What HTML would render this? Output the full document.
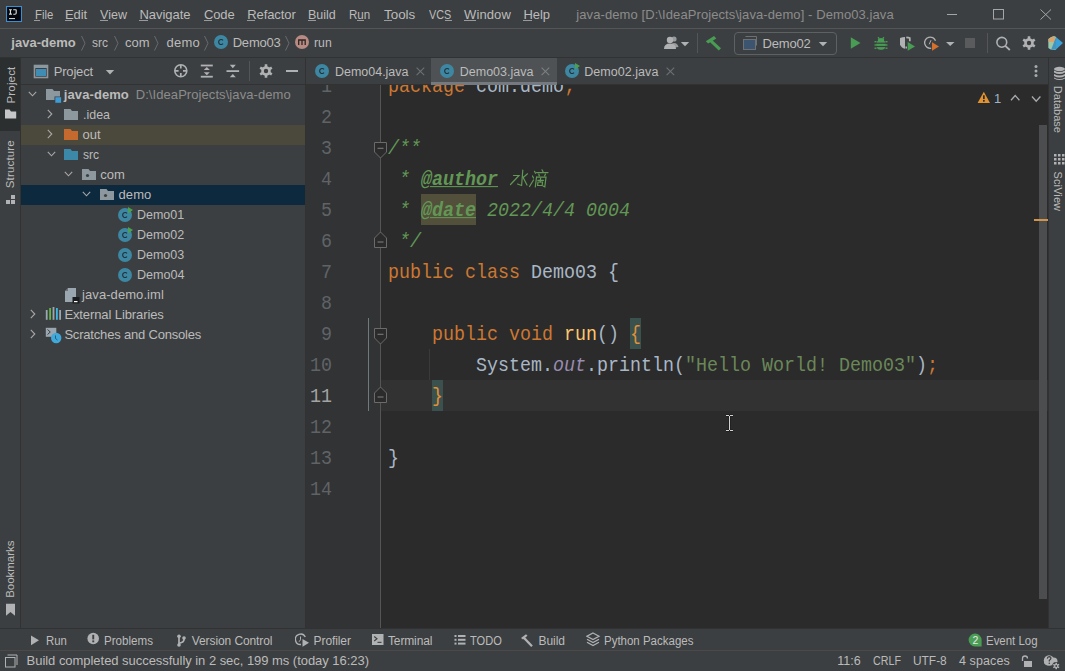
<!DOCTYPE html><html><head><meta charset="utf-8"><style>html,body{margin:0;padding:0;width:1065px;height:671px;overflow:hidden;background:#3c3f41}body>div,body>svg{position:absolute}.t{position:absolute;white-space:pre;line-height:20px}</style></head><body><div style="left:0px;top:0px;width:1065px;height:671px;background:#3c3f41;"></div>
<div style="left:0px;top:28px;width:1065px;height:1px;background:#555555;"></div>
<div style="left:0px;top:57px;width:1065px;height:1px;background:#323232;"></div>
<div style="left:0px;top:58px;width:20px;height:73px;background:#2c2f30;"></div>
<div style="left:20px;top:58px;width:1px;height:570px;background:#323232;"></div>
<div style="left:21px;top:84px;width:284px;height:1px;background:#323232;"></div>
<div style="left:305px;top:58px;width:1px;height:570px;background:#323232;"></div>
<div style="left:306px;top:84px;width:742px;height:1px;background:#323232;"></div>
<div style="left:306px;top:85px;width:74px;height:543px;background:#313335;"></div>
<div style="left:381px;top:85px;width:667px;height:543px;background:#2b2b2b;"></div>
<div style="left:1048px;top:58px;width:1px;height:570px;background:#323232;"></div>
<div style="left:0px;top:628px;width:1065px;height:1px;background:#323232;"></div>
<div style="left:0px;top:650px;width:1065px;height:1px;background:#4b4a48;"></div>
<svg style="position:absolute;left:6px;top:6px;" width="16" height="16" viewBox="0 0 16 16"><rect x="0.5" y="0.5" width="15" height="15" fill="#03070b" stroke="#3b8fd0" stroke-width="1.1"/><path d="M3 3.7H5.9M4.45 3.7V8.1M3 8.1H5.9M7.2 3.7H10.4M10.2 3.7V7 Q10.2 8.2 9 8.2 H7.3" stroke="#dcdcdc" stroke-width="1.15" fill="none"/><rect x="3" y="12.1" width="6" height="1" fill="#e0e0e0"/></svg>
<div class="t" style="left:34.50px;top:5px;font-family:'Liberation Sans', sans-serif;font-size:13px;font-weight:normal;font-style:normal;color:#bbbbbb;letter-spacing:0.000px;transform-origin:0.00px 0;transform:scaleX(0.8735);">File</div>
<div style="left:34px;top:20px;width:6px;height:1px;background:#9a9a9a;"></div>
<div class="t" style="left:65.10px;top:5px;font-family:'Liberation Sans', sans-serif;font-size:13px;font-weight:normal;font-style:normal;color:#bbbbbb;letter-spacing:-0.167px;">Edit</div>
<div style="left:65px;top:20px;width:7px;height:1px;background:#9a9a9a;"></div>
<div class="t" style="left:100.00px;top:5px;font-family:'Liberation Sans', sans-serif;font-size:13px;font-weight:normal;font-style:normal;color:#bbbbbb;letter-spacing:0.000px;transform-origin:0.00px 0;transform:scaleX(0.9643);">View</div>
<div style="left:100px;top:20px;width:8px;height:1px;background:#9a9a9a;"></div>
<div class="t" style="left:139.40px;top:5px;font-family:'Liberation Sans', sans-serif;font-size:13px;font-weight:normal;font-style:normal;color:#bbbbbb;letter-spacing:-0.029px;">Navigate</div>
<div style="left:139px;top:20px;width:9px;height:1px;background:#9a9a9a;"></div>
<div class="t" style="left:204.00px;top:5px;font-family:'Liberation Sans', sans-serif;font-size:13px;font-weight:normal;font-style:normal;color:#bbbbbb;letter-spacing:-0.133px;">Code</div>
<div style="left:204px;top:20px;width:8px;height:1px;background:#9a9a9a;"></div>
<div class="t" style="left:247.20px;top:5px;font-family:'Liberation Sans', sans-serif;font-size:13px;font-weight:normal;font-style:normal;color:#bbbbbb;letter-spacing:-0.079px;">Refactor</div>
<div style="left:247px;top:20px;width:8px;height:1px;background:#9a9a9a;"></div>
<div class="t" style="left:308.40px;top:5px;font-family:'Liberation Sans', sans-serif;font-size:13px;font-weight:normal;font-style:normal;color:#bbbbbb;letter-spacing:0.000px;transform-origin:0.00px 0;transform:scaleX(0.9619);">Build</div>
<div style="left:308px;top:20px;width:8px;height:1px;background:#9a9a9a;"></div>
<div class="t" style="left:349.40px;top:5px;font-family:'Liberation Sans', sans-serif;font-size:13px;font-weight:normal;font-style:normal;color:#bbbbbb;letter-spacing:0.000px;transform-origin:0.00px 0;transform:scaleX(0.8889);">Run</div>
<div style="left:357px;top:20px;width:7px;height:1px;background:#9a9a9a;"></div>
<div class="t" style="left:384.40px;top:5px;font-family:'Liberation Sans', sans-serif;font-size:13px;font-weight:normal;font-style:normal;color:#bbbbbb;letter-spacing:0.000px;transform-origin:0.00px 0;transform:scaleX(1.0313);">Tools</div>
<div style="left:384px;top:20px;width:8px;height:1px;background:#9a9a9a;"></div>
<div class="t" style="left:429.40px;top:5px;font-family:'Liberation Sans', sans-serif;font-size:13px;font-weight:normal;font-style:normal;color:#bbbbbb;letter-spacing:0.000px;transform-origin:0.00px 0;transform:scaleX(0.8336);">VCS</div>
<div style="left:445px;top:20px;width:7px;height:1px;background:#9a9a9a;"></div>
<div class="t" style="left:464.00px;top:5px;font-family:'Liberation Sans', sans-serif;font-size:13px;font-weight:normal;font-style:normal;color:#bbbbbb;letter-spacing:0.120px;">Window</div>
<div style="left:464px;top:20px;width:12px;height:1px;background:#9a9a9a;"></div>
<div class="t" style="left:523.40px;top:5px;font-family:'Liberation Sans', sans-serif;font-size:13px;font-weight:normal;font-style:normal;color:#bbbbbb;letter-spacing:-0.050px;">Help</div>
<div style="left:523px;top:20px;width:9px;height:1px;background:#9a9a9a;"></div>
<div class="t" style="left:576.25px;top:5px;font-family:'Liberation Sans', sans-serif;font-size:13px;font-weight:normal;font-style:normal;color:#8c8c8c;letter-spacing:0.091px;">java-demo [D:\IdeaProjects\java-demo] - Demo03.java</div>
<div style="left:947px;top:14px;width:10px;height:1px;background:#a6a6a6;"></div>
<svg style="position:absolute;left:993px;top:9px;" width="12" height="11" viewBox="0 0 12 11"><rect x="0.5" y="0.5" width="10" height="9.5" fill="none" stroke="#a6a6a6"/></svg>
<svg style="position:absolute;left:1040px;top:9px;" width="12" height="11" viewBox="0 0 12 11"><path d="M0.5 0.5L11 10.5M11 0.5L0.5 10.5" stroke="#a6a6a6" stroke-width="1"/></svg>
<div class="t" style="left:11.25px;top:33px;font-family:'Liberation Sans', sans-serif;font-size:13px;font-weight:bold;font-style:normal;color:#bbbbbb;letter-spacing:0.019px;">java-demo</div>
<svg style="position:absolute;left:80px;top:35px;" width="8" height="17" viewBox="0 0 8 17"><path d="M1.5 1 L5.0 8.2 L1.5 15.5" fill="none" stroke="#686b6d" stroke-width="1"/></svg>
<div class="t" style="left:92.00px;top:33px;font-family:'Liberation Sans', sans-serif;font-size:13px;font-weight:normal;font-style:normal;color:#bbbbbb;letter-spacing:0.000px;transform-origin:0.00px 0;transform:scaleX(0.9222);">src</div>
<svg style="position:absolute;left:113px;top:35px;" width="8" height="17" viewBox="0 0 8 17"><path d="M1.5 1 L5.0 8.2 L1.5 15.5" fill="none" stroke="#686b6d" stroke-width="1"/></svg>
<div class="t" style="left:125.00px;top:33px;font-family:'Liberation Sans', sans-serif;font-size:13px;font-weight:normal;font-style:normal;color:#bbbbbb;letter-spacing:0.025px;">com</div>
<svg style="position:absolute;left:153px;top:35px;" width="8" height="17" viewBox="0 0 8 17"><path d="M1.5 1 L5.0 8.2 L1.5 15.5" fill="none" stroke="#686b6d" stroke-width="1"/></svg>
<div class="t" style="left:166.40px;top:33px;font-family:'Liberation Sans', sans-serif;font-size:13px;font-weight:normal;font-style:normal;color:#bbbbbb;letter-spacing:0.267px;">demo</div>
<svg style="position:absolute;left:203px;top:35px;" width="8" height="17" viewBox="0 0 8 17"><path d="M1.5 1 L5.0 8.2 L1.5 15.5" fill="none" stroke="#686b6d" stroke-width="1"/></svg>
<svg style="position:absolute;left:213px;top:34px;" width="17" height="16" viewBox="0 0 17 16"><circle cx="8" cy="8" r="7" fill="#3d87a2"/><path d="M10 6.3 A2.5 2.5 0 1 0 10 9.7" fill="none" stroke="#22303a" stroke-width="1.15"/></svg>
<div class="t" style="left:232.70px;top:33px;font-family:'Liberation Sans', sans-serif;font-size:13px;font-weight:normal;font-style:normal;color:#bbbbbb;letter-spacing:-0.210px;">Demo03</div>
<svg style="position:absolute;left:284px;top:35px;" width="8" height="17" viewBox="0 0 8 17"><path d="M1.5 1 L5.0 8.2 L1.5 15.5" fill="none" stroke="#686b6d" stroke-width="1"/></svg>
<svg style="position:absolute;left:294px;top:34px;" width="16" height="16" viewBox="0 0 16 16"><circle cx="8" cy="8" r="7" fill="#b78a83"/><path d="M4.7 11V6H11.2V11M8 6V11" fill="none" stroke="#2e2523" stroke-width="1.3"/></svg>
<div class="t" style="left:313.80px;top:33px;font-family:'Liberation Sans', sans-serif;font-size:13px;font-weight:normal;font-style:normal;color:#bbbbbb;letter-spacing:0.000px;transform-origin:0.00px 0;transform:scaleX(0.9415);">run</div>
<svg style="position:absolute;left:662px;top:35px;" width="18" height="15" viewBox="0 0 18 15"><circle cx="12" cy="4" r="2.6" fill="#afb1b3" opacity="0.8"/><path d="M9 13 q0-5 3-5 q3.5 0 4.5 4" fill="#afb1b3" opacity="0.8"/><circle cx="8" cy="5" r="3.2" fill="#afb1b3"/><path d="M2 14 q0-5.5 6-5.5 q6 0 6 5.5z" fill="#afb1b3"/></svg>
<svg style="position:absolute;left:680px;top:41px;" width="10" height="6" viewBox="0 0 10 6"><path d="M0.8 1 H9.2 L5 5.2Z" fill="#afb1b3"/></svg>
<div style="left:697px;top:33px;width:1px;height:20px;background:#555555;"></div>
<svg style="position:absolute;left:704px;top:35px;" width="19" height="16" viewBox="0 0 19 16"><path d="M1.8 6.2 L10 1 L12.3 3.6 L4.2 8.6 Z" fill="#499c54"/><path d="M7.6 4.6 L17 13.2 L14.8 15.4 L5.6 6.8Z" fill="#499c54"/></svg>
<div style="left:733.5px;top:32px;width:101.5px;height:20.5px;border:1px solid #5e6162;border-radius:4px"></div>
<svg style="position:absolute;left:742px;top:35px;" width="16" height="16" viewBox="0 0 16 16"><path d="M3.5 1.5 H14.5 V10.5" fill="none" stroke="#6e7173" stroke-width="1"/><rect x="1.5" y="4.5" width="12" height="10" fill="#3c5470" stroke="#6e7173" stroke-width="1"/></svg>
<div class="t" style="left:762.50px;top:34px;font-family:'Liberation Sans', sans-serif;font-size:13px;font-weight:normal;font-style:normal;color:#bbbbbb;letter-spacing:-0.170px;">Demo02</div>
<svg style="position:absolute;left:818px;top:41px;" width="10" height="6" viewBox="0 0 10 6"><path d="M0.8 1 H9.2 L5 5.2Z" fill="#afb1b3"/></svg>
<svg style="position:absolute;left:850px;top:37px;" width="12" height="13" viewBox="0 0 12 13"><path d="M0.8 0.2 L10.5 6 L0.8 11.8Z" fill="#499c54"/></svg>
<svg style="position:absolute;left:873px;top:35px;" width="16" height="16" viewBox="0 0 16 16"><g fill="#499c54"><path d="M5 2.2 L6.3 3.6 M11 2.2 L9.7 3.6" stroke="#499c54" stroke-width="1.3"/><ellipse cx="8" cy="5" rx="3.2" ry="2"/><rect x="3.2" y="5" width="9.6" height="9.8" rx="4.2"/><rect x="1.5" y="6" width="2" height="1.4"/><rect x="12.5" y="6" width="2" height="1.4"/><rect x="1.5" y="9.3" width="2" height="1.4"/><rect x="12.5" y="9.3" width="2" height="1.4"/><rect x="1.5" y="12.5" width="2" height="1.4"/><rect x="12.5" y="12.5" width="2" height="1.4"/></g><rect x="3" y="7.6" width="10" height="1.2" fill="#3c3f41"/><rect x="3" y="10.9" width="10" height="1.2" fill="#3c3f41"/></svg>
<svg style="position:absolute;left:899px;top:36px;" width="17" height="16" viewBox="0 0 17 16"><path d="M1 2 Q3.5 1 6 1 V12.8 Q2.2 11.8 1 8.5Z" fill="#afb1b3"/><path d="M7.3 1.3 Q9.5 1.5 10.8 2 V5.3" fill="none" stroke="#afb1b3" stroke-width="1.7"/><path d="M7.2 10.5 V12.6" stroke="#afb1b3" stroke-width="1.5"/><path d="M8.7 5.9 L16 10.4 L8.7 14.8Z" fill="#499c54"/></svg>
<svg style="position:absolute;left:923px;top:35px;" width="17" height="16" viewBox="0 0 17 16"><path d="M12.5 5.8 A5.6 5.6 0 1 0 8.2 13.2" fill="none" stroke="#afb1b3" stroke-width="1.3"/><path d="M6.2 9.3 L8 5.2" fill="none" stroke="#afb1b3" stroke-width="1"/><path d="M9 7.2 L16 11.5 L9 15.8Z" fill="#d6712d"/></svg>
<svg style="position:absolute;left:946px;top:41px;" width="9" height="6" viewBox="0 0 9 6"><path d="M0 1 H8.5 L4.2 5Z" fill="#afb1b3"/></svg>
<div style="left:965px;top:38px;width:10px;height:10px;background:#595b5d;"></div>
<div style="left:987px;top:33px;width:1px;height:20px;background:#555555;"></div>
<svg style="position:absolute;left:995px;top:35px;" width="16" height="16" viewBox="0 0 16 16"><circle cx="6.8" cy="7.3" r="4.9" fill="none" stroke="#afb1b3" stroke-width="1.6"/><path d="M10.3 10.8 L14.8 15" stroke="#afb1b3" stroke-width="1.8"/></svg>
<svg style="position:absolute;left:1021px;top:35px;" width="16" height="16" viewBox="0 0 16 16"><g fill="#afb1b3"><circle cx="8" cy="8" r="4.8"/><g stroke="#afb1b3" stroke-width="2.6"><path d="M8 1.3V14.7M2.2 4.65L13.8 11.35M13.8 4.65L2.2 11.35"/></g></g><circle cx="8" cy="8" r="2.2" fill="#3c3f41"/></svg>
<svg style="position:absolute;left:1047px;top:35px;" width="18" height="17" viewBox="0 0 18 17"><path d="M1.5 4 Q6 0 9 2 L16 8 L9 14.5 Q5 16 1.5 13 Z" fill="#3aa0d8"/><path d="M1.5 4 Q6 0 9 2 L9 14.5 Q5 16 1.5 13 Z" fill="#9fc7a6"/><path d="M1.5 4 Q5 0.5 8 1.7 L8 7 L1.5 7Z" fill="#d8a46c"/><path d="M9 2 L9 14.5 L4 15" fill="#2e87c7" opacity="0.8"/></svg>
<div class="t" style="left:0;top:0;transform-origin:0 0;transform:translate(0.50px,103.50px) rotate(-90deg);font-family:'Liberation Sans',sans-serif;font-size:11.5px;color:#bbbbbb;letter-spacing:0.167px">Project</div>
<svg style="position:absolute;left:4px;top:109px;" width="13" height="11" viewBox="0 0 13 11"><path d="M1 0.5 H5.5 L7 2.5 H12.2 V9.5 H1Z" fill="#c4c6c8"/></svg>
<div class="t" style="left:0;top:0;transform-origin:0 0;transform:translate(0.30px,188.30px) rotate(-90deg);font-family:'Liberation Sans',sans-serif;font-size:11.5px;color:#bbbbbb;letter-spacing:0.169px">Structure</div>
<svg style="position:absolute;left:5px;top:194px;" width="12" height="11" viewBox="0 0 12 11"><g fill="#b0b2b4"><rect x="6" y="1" width="4" height="4"/><rect x="1" y="6" width="4" height="4"/><rect x="6" y="6" width="4" height="4"/></g></svg>
<div class="t" style="left:0;top:0;transform-origin:0 0;transform:translate(0.10px,597.80px) rotate(-90deg);font-family:'Liberation Sans',sans-serif;font-size:11.5px;color:#bbbbbb;letter-spacing:-0.038px">Bookmarks</div>
<svg style="position:absolute;left:5px;top:603px;" width="11" height="14" viewBox="0 0 11 14"><path d="M1 0.8 H10 V12.8 L5.5 9 L1 12.8Z" fill="#b0b2b4"/></svg>
<svg style="position:absolute;left:33px;top:64px;" width="16" height="15" viewBox="0 0 16 15"><rect x="1.5" y="1.5" width="13" height="12" fill="none" stroke="#8d979e" stroke-width="1.6"/><rect x="1" y="1" width="14" height="3" fill="#8d979e"/><rect x="3" y="5" width="10" height="7" fill="#3f8db5"/></svg>
<div class="t" style="left:53.70px;top:62px;font-family:'Liberation Sans', sans-serif;font-size:13px;font-weight:normal;font-style:normal;color:#bbbbbb;letter-spacing:-0.175px;">Project</div>
<svg style="position:absolute;left:105px;top:69px;" width="10" height="7" viewBox="0 0 10 7"><path d="M0.8 1 H9.2 L5 5.5Z" fill="#afb1b3"/></svg>
<svg style="position:absolute;left:173px;top:63px;" width="16" height="16" viewBox="0 0 16 16"><circle cx="7.8" cy="7.8" r="6" fill="none" stroke="#afb1b3" stroke-width="1.6"/><path d="M7.8 2V5.6M7.8 10V13.6M2 7.8H5.6M10 7.8H13.6" stroke="#afb1b3" stroke-width="1.7"/></svg>
<svg style="position:absolute;left:200px;top:64px;" width="14" height="14" viewBox="0 0 14 14"><g fill="#afb1b3"><rect x="0.8" y="0.6" width="12" height="1.8"/><rect x="0.8" y="11.8" width="12" height="1.8"/><path d="M3.8 6 L6.8 3 L9.8 6Z"/><path d="M3.8 8.2 L6.8 11.2 L9.8 8.2Z"/></g></svg>
<svg style="position:absolute;left:226px;top:64px;" width="14" height="14" viewBox="0 0 14 14"><g fill="#afb1b3"><rect x="0.5" y="6.2" width="12.6" height="1.8"/><path d="M3.8 0.8 L6.8 4.2 L9.8 0.8Z"/><path d="M3.8 13.2 L6.8 9.9 L9.8 13.2Z"/></g></svg>
<div style="left:249px;top:61px;width:1px;height:20px;background:#555555;"></div>
<svg style="position:absolute;left:258px;top:63px;" width="16" height="16" viewBox="0 0 16 16"><g fill="#afb1b3"><circle cx="8" cy="8" r="4.8"/><g stroke="#afb1b3" stroke-width="2.6"><path d="M8 1.3V14.7M2.2 4.65L13.8 11.35M13.8 4.65L2.2 11.35"/></g></g><circle cx="8" cy="8" r="2.2" fill="#3c3f41"/></svg>
<div style="left:286px;top:70px;width:12px;height:2px;background:#afb1b3;"></div>
<div style="left:21px;top:125px;width:284px;height:20px;background:#4b493c;"></div>
<div style="left:21px;top:185px;width:284px;height:20px;background:#0d293e;"></div>
<svg style="position:absolute;left:28px;top:91px;" width="10" height="7" viewBox="0 0 10 7"><path d="M0.8 0.8 L4.5 4.8 L8.2 0.8" fill="none" stroke="#a8a8a8" stroke-width="1.1"/></svg>
<svg style="position:absolute;left:46px;top:89px;" width="16" height="14" viewBox="0 0 16 14"><path d="M0 0 H6.5 L8 2 H14 V11 H0Z" fill="#8d979e"/><rect x="8.5" y="7.5" width="6.5" height="6" fill="#3c3f41"/><rect x="9.3" y="8.2" width="5.8" height="5.6" fill="#3d9bd6"/></svg>
<div class="t" style="left:63.85px;top:85px;font-family:'Liberation Sans', sans-serif;font-size:13px;font-weight:bold;font-style:normal;color:#bbbbbb;letter-spacing:0.081px;">java-demo</div>
<div class="t" style="left:135.70px;top:85px;font-family:'Liberation Sans', sans-serif;font-size:13px;font-weight:normal;font-style:normal;color:#8c8c8c;letter-spacing:0.075px;">D:\IdeaProjects\java-demo</div>
<svg style="position:absolute;left:47px;top:109px;" width="7" height="11" viewBox="0 0 7 11"><path d="M0.8 0.8 L4.8 5 L0.8 9.2" fill="none" stroke="#a8a8a8" stroke-width="1.1"/></svg>
<svg style="position:absolute;left:64px;top:109px;" width="14" height="12" viewBox="0 0 14 12"><path d="M0 0 H6.5 L8 2 H14 V11 H0Z" fill="#8d979e"/></svg>
<div class="t" style="left:82.50px;top:105px;font-family:'Liberation Sans', sans-serif;font-size:13px;font-weight:normal;font-style:normal;color:#bbbbbb;letter-spacing:0.000px;transform-origin:0.00px 0;transform:scaleX(0.9574);">.idea</div>
<svg style="position:absolute;left:47px;top:129px;" width="7" height="11" viewBox="0 0 7 11"><path d="M0.8 0.8 L4.8 5 L0.8 9.2" fill="none" stroke="#a8a8a8" stroke-width="1.1"/></svg>
<svg style="position:absolute;left:64px;top:129px;" width="14" height="12" viewBox="0 0 14 12"><path d="M0 0 H6.5 L8 2 H14 V11 H0Z" fill="#c46a2e"/></svg>
<div class="t" style="left:82.50px;top:125px;font-family:'Liberation Sans', sans-serif;font-size:13px;font-weight:normal;font-style:normal;color:#bbbbbb;letter-spacing:0.025px;">out</div>
<svg style="position:absolute;left:47px;top:151px;" width="10" height="7" viewBox="0 0 10 7"><path d="M0.8 0.8 L4.5 4.8 L8.2 0.8" fill="none" stroke="#a8a8a8" stroke-width="1.1"/></svg>
<svg style="position:absolute;left:64px;top:149px;" width="14" height="12" viewBox="0 0 14 12"><path d="M0 0 H6.5 L8 2 H14 V11 H0Z" fill="#3b88a8"/></svg>
<div class="t" style="left:82.50px;top:145px;font-family:'Liberation Sans', sans-serif;font-size:13px;font-weight:normal;font-style:normal;color:#bbbbbb;letter-spacing:0.000px;transform-origin:0.00px 0;transform:scaleX(0.9280);">src</div>
<svg style="position:absolute;left:64px;top:171px;" width="10" height="7" viewBox="0 0 10 7"><path d="M0.8 0.8 L4.5 4.8 L8.2 0.8" fill="none" stroke="#a8a8a8" stroke-width="1.1"/></svg>
<svg style="position:absolute;left:82px;top:169px;" width="14" height="12" viewBox="0 0 14 12"><path d="M0 0 H6.5 L8 2 H14 V11 H0Z" fill="#8d979e"/><circle cx="5.5" cy="6.5" r="1.6" fill="#3c3f41"/></svg>
<div class="t" style="left:100.30px;top:165px;font-family:'Liberation Sans', sans-serif;font-size:13px;font-weight:normal;font-style:normal;color:#bbbbbb;letter-spacing:-0.025px;">com</div>
<svg style="position:absolute;left:82px;top:191px;" width="10" height="7" viewBox="0 0 10 7"><path d="M0.8 0.8 L4.5 4.8 L8.2 0.8" fill="none" stroke="#a8a8a8" stroke-width="1.1"/></svg>
<svg style="position:absolute;left:100px;top:189px;" width="14" height="12" viewBox="0 0 14 12"><path d="M0 0 H6.5 L8 2 H14 V11 H0Z" fill="#8d979e"/><circle cx="5.5" cy="6.5" r="1.6" fill="#3c3f41"/></svg>
<div class="t" style="left:118.50px;top:185px;font-family:'Liberation Sans', sans-serif;font-size:13px;font-weight:normal;font-style:normal;color:#bbbbbb;letter-spacing:0.100px;">demo</div>
<svg style="position:absolute;left:117px;top:207px;" width="17" height="16" viewBox="0 0 17 16"><circle cx="8" cy="8" r="7" fill="#3d87a2"/><path d="M10 6.3 A2.5 2.5 0 1 0 10 9.7" fill="none" stroke="#22303a" stroke-width="1.15"/><path d="M11 0 L16 3 L11 6.5 Z" fill="#4aa051"/></svg>
<div class="t" style="left:136.60px;top:205px;font-family:'Liberation Sans', sans-serif;font-size:13px;font-weight:normal;font-style:normal;color:#bbbbbb;letter-spacing:0.000px;transform-origin:0.00px 0;transform:scaleX(0.9603);">Demo01</div>
<svg style="position:absolute;left:117px;top:227px;" width="17" height="16" viewBox="0 0 17 16"><circle cx="8" cy="8" r="7" fill="#3d87a2"/><path d="M10 6.3 A2.5 2.5 0 1 0 10 9.7" fill="none" stroke="#22303a" stroke-width="1.15"/><path d="M11 0 L16 3 L11 6.5 Z" fill="#4aa051"/></svg>
<div class="t" style="left:136.60px;top:225px;font-family:'Liberation Sans', sans-serif;font-size:13px;font-weight:normal;font-style:normal;color:#bbbbbb;letter-spacing:0.000px;transform-origin:0.00px 0;transform:scaleX(0.9603);">Demo02</div>
<svg style="position:absolute;left:117px;top:247px;" width="17" height="16" viewBox="0 0 17 16"><circle cx="8" cy="8" r="7" fill="#3d87a2"/><path d="M10 6.3 A2.5 2.5 0 1 0 10 9.7" fill="none" stroke="#22303a" stroke-width="1.15"/></svg>
<div class="t" style="left:136.60px;top:245px;font-family:'Liberation Sans', sans-serif;font-size:13px;font-weight:normal;font-style:normal;color:#bbbbbb;letter-spacing:0.000px;transform-origin:0.00px 0;transform:scaleX(0.9603);">Demo03</div>
<svg style="position:absolute;left:117px;top:267px;" width="17" height="16" viewBox="0 0 17 16"><circle cx="8" cy="8" r="7" fill="#3d87a2"/><path d="M10 6.3 A2.5 2.5 0 1 0 10 9.7" fill="none" stroke="#22303a" stroke-width="1.15"/></svg>
<div class="t" style="left:136.60px;top:265px;font-family:'Liberation Sans', sans-serif;font-size:13px;font-weight:normal;font-style:normal;color:#bbbbbb;letter-spacing:0.000px;transform-origin:0.00px 0;transform:scaleX(0.9685);">Demo04</div>
<svg style="position:absolute;left:65px;top:288px;" width="15" height="16" viewBox="0 0 15 16"><path d="M3 0 H11 V14 H0 V3Z" fill="#9aa7b0"/><path d="M0 3 L3 0 V3Z" fill="#3c3f41" opacity="0.5"/><rect x="7.5" y="9" width="7" height="6.5" fill="#1a1d1f"/><rect x="9" y="13" width="3.5" height="1.2" fill="#fff"/></svg>
<div class="t" style="left:82.05px;top:285px;font-family:'Liberation Sans', sans-serif;font-size:13px;font-weight:normal;font-style:normal;color:#bbbbbb;letter-spacing:0.071px;">java-demo.iml</div>
<svg style="position:absolute;left:30px;top:309px;" width="7" height="11" viewBox="0 0 7 11"><path d="M0.8 0.8 L4.8 5 L0.8 9.2" fill="none" stroke="#a8a8a8" stroke-width="1.1"/></svg>
<svg style="position:absolute;left:45px;top:307px;" width="16" height="14" viewBox="0 0 16 14"><rect x="0.8" y="3" width="1.8" height="9.8" fill="#9aa7b0"/><rect x="4.2" y="1" width="1.8" height="11.8" fill="#62b543"/><rect x="7.6" y="0" width="1.8" height="12.8" fill="#9aa7b0"/><rect x="11" y="1" width="1.8" height="11.8" fill="#40b6e0"/><rect x="14.2" y="3" width="1.8" height="9.8" fill="#9aa7b0"/></svg>
<div class="t" style="left:64.40px;top:305px;font-family:'Liberation Sans', sans-serif;font-size:13px;font-weight:normal;font-style:normal;color:#bbbbbb;letter-spacing:-0.103px;">External Libraries</div>
<svg style="position:absolute;left:30px;top:329px;" width="7" height="11" viewBox="0 0 7 11"><path d="M0.8 0.8 L4.8 5 L0.8 9.2" fill="none" stroke="#a8a8a8" stroke-width="1.1"/></svg>
<svg style="position:absolute;left:45px;top:327px;" width="18" height="17" viewBox="0 0 18 17"><rect x="0.8" y="0.8" width="10.5" height="9" fill="#9aa7b0"/><path d="M2.5 2.5 L5.3 5 L2.5 7.5" fill="none" stroke="#3c3f41" stroke-width="1"/><circle cx="11.2" cy="11" r="5.2" fill="#40a8db"/><path d="M10.5 8.5 V11.5 L12.5 13" fill="none" stroke="#1f5f80" stroke-width="1"/></svg>
<div class="t" style="left:64.40px;top:325px;font-family:'Liberation Sans', sans-serif;font-size:13px;font-weight:normal;font-style:normal;color:#bbbbbb;letter-spacing:-0.190px;">Scratches and Consoles</div>
<div style="left:431px;top:58px;width:126px;height:26px;background:#4e5254;"></div>
<div style="left:431px;top:82px;width:126px;height:3px;background:#747a80;"></div>
<svg style="position:absolute;left:314px;top:63px;" width="17" height="16" viewBox="0 0 17 16"><circle cx="8" cy="8" r="7" fill="#3d87a2"/><path d="M10 6.3 A2.5 2.5 0 1 0 10 9.7" fill="none" stroke="#22303a" stroke-width="1.15"/></svg>
<div class="t" style="left:335.00px;top:62px;font-family:'Liberation Sans', sans-serif;font-size:12.5px;font-weight:normal;font-style:normal;color:#bbbbbb;letter-spacing:-0.020px;">Demo04.java</div>
<svg style="position:absolute;left:416px;top:67px;" width="9" height="9" viewBox="0 0 9 9"><path d="M0.6 0.6L8.2 8.2M8.2 0.6L0.6 8.2" stroke="#6d7073" stroke-width="1.1"/></svg>
<svg style="position:absolute;left:439px;top:63px;" width="17" height="16" viewBox="0 0 17 16"><circle cx="8" cy="8" r="7" fill="#3d87a2"/><path d="M10 6.3 A2.5 2.5 0 1 0 10 9.7" fill="none" stroke="#22303a" stroke-width="1.15"/></svg>
<div class="t" style="left:459.80px;top:62px;font-family:'Liberation Sans', sans-serif;font-size:12.5px;font-weight:normal;font-style:normal;color:#bbbbbb;letter-spacing:-0.010px;">Demo03.java</div>
<svg style="position:absolute;left:541px;top:67px;" width="9" height="9" viewBox="0 0 9 9"><path d="M0.6 0.6L8.2 8.2M8.2 0.6L0.6 8.2" stroke="#7c7f82" stroke-width="1.1"/></svg>
<svg style="position:absolute;left:564px;top:63px;" width="17" height="16" viewBox="0 0 17 16"><circle cx="8" cy="8" r="7" fill="#3d87a2"/><path d="M10 6.3 A2.5 2.5 0 1 0 10 9.7" fill="none" stroke="#22303a" stroke-width="1.15"/><path d="M11 0 L16 3 L11 6.5 Z" fill="#4aa051"/></svg>
<div class="t" style="left:584.30px;top:62px;font-family:'Liberation Sans', sans-serif;font-size:12.5px;font-weight:normal;font-style:normal;color:#bbbbbb;letter-spacing:0.040px;">Demo02.java</div>
<svg style="position:absolute;left:666px;top:67px;" width="9" height="9" viewBox="0 0 9 9"><path d="M0.6 0.6L8.2 8.2M8.2 0.6L0.6 8.2" stroke="#6d7073" stroke-width="1.1"/></svg>
<svg style="position:absolute;left:1033px;top:63px;" width="6" height="16" viewBox="0 0 6 16"><g fill="#a9abad"><circle cx="3" cy="3.5" r="1.5"/><circle cx="3" cy="8" r="1.5"/><circle cx="3" cy="12.6" r="1.5"/></g></svg>
<svg style="position:absolute;left:1053px;top:66px;" width="13" height="15" viewBox="0 0 13 15"><g fill="#b0b2b4"><ellipse cx="6.5" cy="3" rx="5.5" ry="2.2"/><path d="M1 4.5 Q6.5 7.5 12 4.5 V6.5 Q6.5 9.5 1 6.5Z"/><path d="M1 8 Q6.5 11 12 8 V10 Q6.5 13 1 10Z"/><path d="M1 11.5 Q6.5 14.5 12 11.5 V12.5 Q6.5 15.5 1 12.5Z"/></g></svg>
<div style="left:380px;top:85px;width:1px;height:543px;background:#555555;"></div>
<div style="left:381px;top:380px;width:667px;height:31px;background:#323232;"></div>
<div style="left:421px;top:194px;width:55px;height:31px;background:#52503a;"></div>
<div style="left:630px;top:318px;width:11px;height:31px;background:#3b514d;"></div>
<div style="left:432px;top:380px;width:11px;height:31px;background:#3b514d;"></div>
<div style="left:429px;top:349px;width:1px;height:31px;background:#3a3a3a;"></div>
<div style="left:368px;top:318px;width:1px;height:93px;background:#6f7a7c;"></div>
<div style="left:381px;top:85px;width:667px;height:543px;overflow:hidden">
<div class="t" style="left:7px;top:-7px;font-family:'Liberation Mono',monospace;font-size:18.333px;transform-origin:0 14px;transform:scaleY(1.07)"><span style="color:#cc7832;">package</span><span style="color:#a9b7c6;"> com.demo</span><span style="color:#cc7832;">;</span></div>
<div class="t" style="left:7px;top:55px;font-family:'Liberation Mono',monospace;font-size:18.333px;transform-origin:0 14px;transform:scaleY(1.07)"><span style="color:#629755;font-style:italic;">/**</span></div>
<div class="t" style="left:7px;top:86px;font-family:'Liberation Mono',monospace;font-size:18.333px;transform-origin:0 14px;transform:scaleY(1.07)"><span style="color:#629755;font-style:italic;"> * </span><span style="color:#629755;font-style:italic;font-weight:bold;text-decoration:underline;text-underline-offset:1px;">@author</span><span style="color:#629755;font-style:italic;"> </span></div>
<div class="t" style="left:7px;top:117px;font-family:'Liberation Mono',monospace;font-size:18.333px;transform-origin:0 14px;transform:scaleY(1.07)"><span style="color:#629755;font-style:italic;"> * </span><span style="color:#629755;font-style:italic;font-weight:bold;text-decoration:underline;text-underline-offset:1px;">@date</span><span style="color:#629755;font-style:italic;"> 2022/4/4 0004</span></div>
<div class="t" style="left:7px;top:148px;font-family:'Liberation Mono',monospace;font-size:18.333px;transform-origin:0 14px;transform:scaleY(1.07)"><span style="color:#629755;font-style:italic;"> */</span></div>
<div class="t" style="left:7px;top:179px;font-family:'Liberation Mono',monospace;font-size:18.333px;transform-origin:0 14px;transform:scaleY(1.07)"><span style="color:#cc7832;">public class </span><span style="color:#a9b7c6;">Demo03 {</span></div>
<div class="t" style="left:7px;top:241px;font-family:'Liberation Mono',monospace;font-size:18.333px;transform-origin:0 14px;transform:scaleY(1.07)"><span style="color:#cc7832;">    public void </span><span style="color:#ffc66d;">run</span><span style="color:#a9b7c6;">() </span><span style="color:#e0903a;">{</span></div>
<div class="t" style="left:7px;top:272px;font-family:'Liberation Mono',monospace;font-size:18.333px;transform-origin:0 14px;transform:scaleY(1.07)"><span style="color:#a9b7c6;">        System.</span><span style="color:#9a8cb0;font-style:italic;">out</span><span style="color:#a9b7c6;">.println(</span><span style="color:#6a8759;">"Hello World! Demo03"</span><span style="color:#a9b7c6;">)</span><span style="color:#cc7832;">;</span></div>
<div class="t" style="left:7px;top:303px;font-family:'Liberation Mono',monospace;font-size:18.333px;transform-origin:0 14px;transform:scaleY(1.07)"><span style="color:#a9b7c6;">    </span><span style="color:#e0903a;">}</span></div>
<div class="t" style="left:7px;top:365px;font-family:'Liberation Mono',monospace;font-size:18.333px;transform-origin:0 14px;transform:scaleY(1.07)"><span style="color:#a9b7c6;">}</span></div>
</div>
<svg style="position:absolute;left:505px;top:165px;" width="50" height="25" viewBox="0 0 50 25"><g fill="none" stroke="#629755" stroke-width="1.2" stroke-linecap="round" transform="translate(-505,-165)"><path d="M522.8 170 L521.6 185.5 L517.5 184"/><path d="M513.5 175.5 H519 L510.5 184.5"/><path d="M527.5 173.8 L523.2 177.5"/><path d="M522.6 176.5 L527 185"/><path d="M534.5 171.3 L535.5 173.3"/><path d="M532.5 176 L533.5 178"/><path d="M529.5 186.5 L533.5 180"/><path d="M542 169.8 L543 171.6"/><path d="M536.5 172.6 H548"/><path d="M538.8 174 L539.3 176"/><path d="M545.5 174 L544.6 176"/><path d="M536.5 177.2 H546 L544.8 186.8 L543 186"/><path d="M536.5 177.2 L535.3 187"/><path d="M537.8 180.3 H543.5"/><path d="M540.6 178 L540.2 182"/><path d="M538 182 H542.5 L542.2 185.5 H537.6Z"/></g></svg>
<div style="left:306px;top:85px;width:74px;height:543px;overflow:hidden">
<div class="t" style="left:-6px;top:-7px;width:32px;text-align:right;font-family:'Liberation Mono',monospace;font-size:18.333px;color:#606366;transform-origin:0 14px;transform:scaleY(1.07)">1</div>
<div class="t" style="left:-6px;top:24px;width:32px;text-align:right;font-family:'Liberation Mono',monospace;font-size:18.333px;color:#606366;transform-origin:0 14px;transform:scaleY(1.07)">2</div>
<div class="t" style="left:-6px;top:55px;width:32px;text-align:right;font-family:'Liberation Mono',monospace;font-size:18.333px;color:#606366;transform-origin:0 14px;transform:scaleY(1.07)">3</div>
<div class="t" style="left:-6px;top:86px;width:32px;text-align:right;font-family:'Liberation Mono',monospace;font-size:18.333px;color:#606366;transform-origin:0 14px;transform:scaleY(1.07)">4</div>
<div class="t" style="left:-6px;top:117px;width:32px;text-align:right;font-family:'Liberation Mono',monospace;font-size:18.333px;color:#606366;transform-origin:0 14px;transform:scaleY(1.07)">5</div>
<div class="t" style="left:-6px;top:148px;width:32px;text-align:right;font-family:'Liberation Mono',monospace;font-size:18.333px;color:#606366;transform-origin:0 14px;transform:scaleY(1.07)">6</div>
<div class="t" style="left:-6px;top:179px;width:32px;text-align:right;font-family:'Liberation Mono',monospace;font-size:18.333px;color:#606366;transform-origin:0 14px;transform:scaleY(1.07)">7</div>
<div class="t" style="left:-6px;top:210px;width:32px;text-align:right;font-family:'Liberation Mono',monospace;font-size:18.333px;color:#606366;transform-origin:0 14px;transform:scaleY(1.07)">8</div>
<div class="t" style="left:-6px;top:241px;width:32px;text-align:right;font-family:'Liberation Mono',monospace;font-size:18.333px;color:#606366;transform-origin:0 14px;transform:scaleY(1.07)">9</div>
<div class="t" style="left:-6px;top:272px;width:32px;text-align:right;font-family:'Liberation Mono',monospace;font-size:18.333px;color:#606366;transform-origin:0 14px;transform:scaleY(1.07)">10</div>
<div class="t" style="left:-6px;top:303px;width:32px;text-align:right;font-family:'Liberation Mono',monospace;font-size:18.333px;color:#a4a3a3;transform-origin:0 14px;transform:scaleY(1.07)">11</div>
<div class="t" style="left:-6px;top:334px;width:32px;text-align:right;font-family:'Liberation Mono',monospace;font-size:18.333px;color:#606366;transform-origin:0 14px;transform:scaleY(1.07)">12</div>
<div class="t" style="left:-6px;top:365px;width:32px;text-align:right;font-family:'Liberation Mono',monospace;font-size:18.333px;color:#606366;transform-origin:0 14px;transform:scaleY(1.07)">13</div>
<div class="t" style="left:-6px;top:396px;width:32px;text-align:right;font-family:'Liberation Mono',monospace;font-size:18.333px;color:#606366;transform-origin:0 14px;transform:scaleY(1.07)">14</div>
</div>
<svg style="position:absolute;left:373px;top:142px;" width="15" height="18" viewBox="0 0 15 18"><path d="M1.5 0.5 H13.5 V10 L7.5 16 L1.5 10Z" fill="#2b2b2b" stroke="#6b6b6b" stroke-width="1"/><path d="M4.5 6.3 H10.5" stroke="#7a7a7a" stroke-width="1.1"/></svg>
<svg style="position:absolute;left:373px;top:231px;" width="15" height="18" viewBox="0 0 15 18"><path d="M1.5 16.5 H13.5 V7 L7.5 1 L1.5 7Z" fill="#2b2b2b" stroke="#6b6b6b" stroke-width="1"/><path d="M4.5 11 H10.5" stroke="#7a7a7a" stroke-width="1.1"/></svg>
<svg style="position:absolute;left:373px;top:328px;" width="15" height="18" viewBox="0 0 15 18"><path d="M1.5 0.5 H13.5 V10 L7.5 16 L1.5 10Z" fill="#2b2b2b" stroke="#6b6b6b" stroke-width="1"/><path d="M4.5 6.3 H10.5" stroke="#7a7a7a" stroke-width="1.1"/></svg>
<svg style="position:absolute;left:373px;top:386px;" width="15" height="18" viewBox="0 0 15 18"><path d="M1.5 16.5 H13.5 V7 L7.5 1 L1.5 7Z" fill="#2b2b2b" stroke="#6b6b6b" stroke-width="1"/><path d="M4.5 11 H10.5" stroke="#7a7a7a" stroke-width="1.1"/></svg>
<svg style="position:absolute;left:977px;top:91px;" width="15" height="13" viewBox="0 0 15 13"><path d="M6.8 0.8 L13 12 H0.6Z" fill="#e2932f"/><rect x="6" y="4.3" width="1.7" height="3.8" fill="#2b2b2b"/><rect x="6" y="9" width="1.7" height="1.7" fill="#2b2b2b"/></svg>
<div class="t" style="left:993.90px;top:89px;font-family:'Liberation Sans', sans-serif;font-size:13px;font-weight:normal;font-style:normal;color:#9fb3c8;letter-spacing:0.000px;">1</div>
<svg style="position:absolute;left:1010px;top:94px;" width="11" height="8" viewBox="0 0 11 8"><path d="M1 6.2 L5.2 1.5 L9.4 6.2" fill="none" stroke="#a9abad" stroke-width="1.3"/></svg>
<svg style="position:absolute;left:1031px;top:95px;" width="11" height="8" viewBox="0 0 11 8"><path d="M1 1.5 L5.2 6.2 L9.4 1.5" fill="none" stroke="#a9abad" stroke-width="1.3"/></svg>
<div style="left:1039px;top:125px;width:8px;height:474px;background:#4c4d4f;"></div>
<div style="left:1034px;top:219px;width:14px;height:2px;background:#d0954a;"></div>
<div class="t" style="left:0;top:0;transform-origin:0 0;transform:translate(1068.00px,85.80px) rotate(90deg);font-family:'Liberation Sans',sans-serif;font-size:11px;color:#bbbbbb;letter-spacing:0.014px">Database</div>
<svg style="position:absolute;left:1053px;top:153px;" width="13" height="13" viewBox="0 0 13 13"><g fill="#b0b2b4"><rect x="1" y="1" width="2.5" height="2.5"/><rect x="5" y="1" width="2.5" height="2.5"/><rect x="9" y="1" width="2.5" height="2.5"/><rect x="1" y="5" width="2.5" height="2.5"/><rect x="5" y="5" width="2.5" height="2.5"/><rect x="9" y="5" width="2.5" height="2.5"/><rect x="1" y="9" width="2.5" height="2.5"/><rect x="5" y="9" width="2.5" height="2.5"/><rect x="9" y="9" width="2.5" height="2.5"/></g></svg>
<div class="t" style="left:0;top:0;transform-origin:0 0;transform:translate(1068.00px,171.60px) rotate(90deg);font-family:'Liberation Sans',sans-serif;font-size:11px;color:#bbbbbb;letter-spacing:0.083px">SciView</div>
<div class="t" style="left:46.20px;top:631px;font-family:'Liberation Sans', sans-serif;font-size:12px;font-weight:normal;font-style:normal;color:#bbbbbb;letter-spacing:0.000px;transform-origin:0.00px 0;transform:scaleX(0.9455);">Run</div>
<svg style="position:absolute;left:30px;top:635px;" width="10" height="11" viewBox="0 0 10 11"><path d="M1 0.5 L9 5.3 L1 10.2Z" fill="#afb1b3"/></svg>
<svg style="position:absolute;left:87px;top:632px;" width="13" height="13" viewBox="0 0 13 13"><circle cx="6.2" cy="6.5" r="5.8" fill="#afb1b3"/><rect x="5.3" y="2.8" width="1.9" height="4.6" fill="#3c3f41"/><rect x="5.3" y="8.4" width="1.9" height="1.9" fill="#3c3f41"/></svg>
<div class="t" style="left:104.00px;top:631px;font-family:'Liberation Sans', sans-serif;font-size:12px;font-weight:normal;font-style:normal;color:#bbbbbb;letter-spacing:0.000px;transform-origin:0.00px 0;transform:scaleX(0.9665);">Problems</div>
<svg style="position:absolute;left:176px;top:633px;" width="11" height="14" viewBox="0 0 11 14"><g fill="none" stroke="#afb1b3" stroke-width="1.7"><path d="M3 3 V12"/><path d="M8 5 V6.5 Q8 9.3 3.3 10.2"/></g><g fill="#afb1b3"><circle cx="3" cy="3.3" r="1.8"/><circle cx="3" cy="12" r="1.8"/><circle cx="8" cy="5" r="1.8"/></g></svg>
<div class="t" style="left:191.80px;top:631px;font-family:'Liberation Sans', sans-serif;font-size:12px;font-weight:normal;font-style:normal;color:#bbbbbb;letter-spacing:-0.096px;">Version Control</div>
<svg style="position:absolute;left:295px;top:633px;" width="15" height="15" viewBox="0 0 15 15"><path d="M10.3 4 A5.2 5.2 0 1 0 6 11.5" fill="none" stroke="#afb1b3" stroke-width="1.3"/><path d="M5.5 3.5 V6.8 L4 8.8" fill="none" stroke="#afb1b3" stroke-width="1"/><path d="M7.5 6 L14 9.8 L7.5 13.8Z" fill="#afb1b3"/></svg>
<div class="t" style="left:313.60px;top:631px;font-family:'Liberation Sans', sans-serif;font-size:12px;font-weight:normal;font-style:normal;color:#bbbbbb;letter-spacing:-0.100px;">Profiler</div>
<svg style="position:absolute;left:372px;top:634px;" width="12" height="12" viewBox="0 0 12 12"><rect x="0" y="0" width="11.5" height="11" fill="#afb1b3"/><path d="M2.2 2.5 L5 4.8 L2.2 7" fill="none" stroke="#3c3f41" stroke-width="1.1"/><rect x="5.5" y="7.8" width="4" height="1.1" fill="#3c3f41"/></svg>
<div class="t" style="left:388.00px;top:631px;font-family:'Liberation Sans', sans-serif;font-size:12px;font-weight:normal;font-style:normal;color:#bbbbbb;letter-spacing:-0.136px;">Terminal</div>
<svg style="position:absolute;left:454px;top:634px;" width="12" height="12" viewBox="0 0 12 12"><g fill="#afb1b3"><rect x="0.5" y="1" width="2" height="2"/><rect x="0.5" y="4.8" width="2" height="2"/><rect x="0.5" y="8.6" width="2" height="2"/><rect x="4" y="1" width="7.5" height="2"/><rect x="4" y="4.8" width="7.5" height="2"/><rect x="4" y="8.6" width="7.5" height="2"/></g></svg>
<div class="t" style="left:470.00px;top:631px;font-family:'Liberation Sans', sans-serif;font-size:12px;font-weight:normal;font-style:normal;color:#bbbbbb;letter-spacing:0.000px;transform-origin:0.00px 0;transform:scaleX(0.9231);">TODO</div>
<svg style="position:absolute;left:520px;top:633px;" width="15" height="15" viewBox="0 0 15 15"><path d="M1 5 L6 1.2 L7.5 2.8 L3 6.5Z" fill="#afb1b3"/><path d="M4.5 3.8 L12.8 12.5 L11.2 14 L3 5.5Z" fill="#afb1b3"/></svg>
<div class="t" style="left:538.60px;top:631px;font-family:'Liberation Sans', sans-serif;font-size:12px;font-weight:normal;font-style:normal;color:#bbbbbb;letter-spacing:-0.075px;">Build</div>
<svg style="position:absolute;left:586px;top:632px;" width="15" height="16" viewBox="0 0 15 16"><g fill="none" stroke="#afb1b3" stroke-width="1.3"><path d="M7 1 L13 4.3 L7 7.6 L1 4.3Z"/><path d="M1 7.3 L7 10.6 L13 7.3"/><path d="M1 10.3 L7 13.6 L13 10.3"/></g></svg>
<div class="t" style="left:604.30px;top:631px;font-family:'Liberation Sans', sans-serif;font-size:12px;font-weight:normal;font-style:normal;color:#bbbbbb;letter-spacing:0.000px;transform-origin:0.00px 0;transform:scaleX(0.9572);">Python Packages</div>
<svg style="position:absolute;left:968px;top:633px;" width="15" height="15" viewBox="0 0 15 15"><path d="M7 0.6 A6.4 6.4 0 1 0 7 13.4 H13.6 V7 A6.4 6.4 0 0 0 7 0.6Z" fill="#4a9d54"/></svg>
<div class="t" style="left:972.50px;top:629.5px;font-family:'Liberation Sans', sans-serif;font-size:10.5px;font-weight:normal;font-style:normal;color:#e8e8e8;letter-spacing:0.000px;">2</div>
<div class="t" style="left:986.20px;top:631px;font-family:'Liberation Sans', sans-serif;font-size:12px;font-weight:normal;font-style:normal;color:#bbbbbb;letter-spacing:0.000px;transform-origin:0.00px 0;transform:scaleX(0.9547);">Event Log</div>
<svg style="position:absolute;left:4px;top:654px;" width="15" height="15" viewBox="0 0 15 15"><path d="M3.5 1 H13 V11" fill="none" stroke="#afb1b3" stroke-width="1"/><rect x="1.5" y="3.5" width="9.5" height="9.5" fill="none" stroke="#afb1b3" stroke-width="1"/></svg>
<div class="t" style="left:26.60px;top:651px;font-family:'Liberation Sans', sans-serif;font-size:13px;font-weight:normal;font-style:normal;color:#bbbbbb;letter-spacing:-0.039px;">Build completed successfully in 2 sec, 199 ms (today 16:23)</div>
<div class="t" style="left:837.30px;top:651px;font-family:'Liberation Sans', sans-serif;font-size:12.5px;font-weight:normal;font-style:normal;color:#bbbbbb;letter-spacing:0.033px;">11:6</div>
<div class="t" style="left:873.00px;top:651px;font-family:'Liberation Sans', sans-serif;font-size:12.5px;font-weight:normal;font-style:normal;color:#bbbbbb;letter-spacing:0.000px;transform-origin:0.00px 0;transform:scaleX(0.8576);">CRLF</div>
<div class="t" style="left:913.00px;top:651px;font-family:'Liberation Sans', sans-serif;font-size:12.5px;font-weight:normal;font-style:normal;color:#bbbbbb;letter-spacing:0.000px;transform-origin:0.00px 0;transform:scaleX(0.9520);">UTF-8</div>
<div class="t" style="left:959.00px;top:651px;font-family:'Liberation Sans', sans-serif;font-size:12.5px;font-weight:normal;font-style:normal;color:#bbbbbb;letter-spacing:0.093px;">4 spaces</div>
<svg style="position:absolute;left:1020px;top:655px;" width="13" height="13" viewBox="0 0 13 13"><path d="M2.5 6 V3.5 A2.5 2.5 0 0 1 7.5 3.5" fill="none" stroke="#afb1b3" stroke-width="1.3"/><rect x="4" y="6" width="8" height="6" fill="#afb1b3"/></svg>
<svg style="position:absolute;left:1043px;top:654px;" width="18" height="17" viewBox="0 0 18 17"><g fill="#afb1b3"><circle cx="6" cy="6.5" r="5.2"/><circle cx="10.5" cy="7.5" r="4"/><rect x="1" y="6.5" width="13" height="4" rx="2"/></g><path d="M4.3 4.6 Q4.5 2.6 6.2 2.6 Q8 2.7 7.9 4.4 Q7.8 5.6 6.3 6.3 V7.4" fill="none" stroke="#3c3f41" stroke-width="1.2"/><circle cx="6.3" cy="9.2" r="0.8" fill="#3c3f41"/><g transform="translate(13.2,12)"><circle r="4" fill="#3c3f41"/><path d="M0 -3.3V3.3M-2.9 -1.65L2.9 1.65M2.9 -1.65L-2.9 1.65" stroke="#afb1b3" stroke-width="1.6"/><circle r="1.9" fill="#afb1b3"/><circle r="0.9" fill="#3c3f41"/></g></svg>
<svg style="position:absolute;left:724px;top:413px;" width="11" height="20" viewBox="0 0 11 20"><g stroke="#1a1a1a" stroke-width="3" fill="none" opacity="0.6"><path d="M2 2.5H9M2 17.5H9M5.5 2.5V17.5"/></g><g stroke="#d2d2d2" stroke-width="1" fill="none"><path d="M2 2.5H5M6 2.5H9M2 17.5H5M6 17.5H9M5.5 3V17"/></g></svg></body></html>
